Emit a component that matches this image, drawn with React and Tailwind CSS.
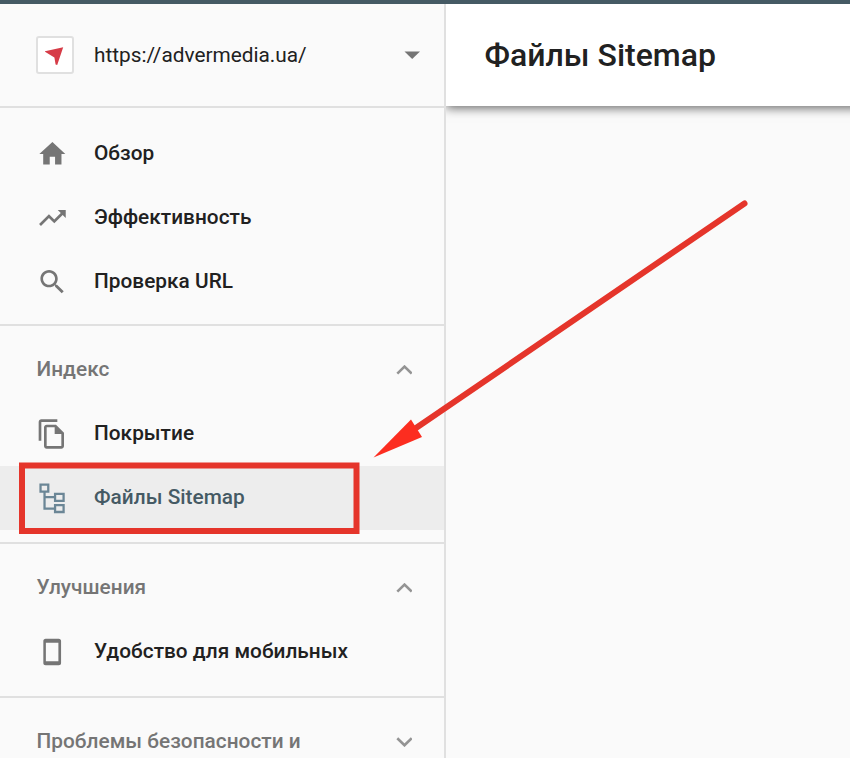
import React from "react";

function Icon({ children, className = "text-[#757575]" }) {
  return (
    <svg viewBox="0 0 24 24" className={"size-8 shrink-0 " + className} fill="currentColor">
      {children}
    </svg>
  );
}

const HomeIcon = () => (
  <Icon><path d="M10.3 19.8v-5.8h4v5.8h4.8v-7.8h2.9L12.3 3 2.5 12h2.9v7.8z" /></Icon>
);
const TrendIcon = () => (
  <Icon><path transform="translate(.3 0)" d="M16 6l2.29 2.29-4.88 4.88-4-4L2 16.59 3.41 18l6-6 4 4 6.3-6.29L22 12V6z" /></Icon>
);
const SearchIcon = () => (
  <Icon><path transform="translate(.3 0)" d="M15.5 14h-.79l-.28-.27C15.41 12.59 16 11.11 16 9.5 16 5.91 13.09 3 9.5 3S3 5.91 3 9.5 5.91 16 9.5 16c1.61 0 3.09-.59 4.23-1.57l.27.28v.79l5 4.99L20.49 19l-4.99-5zm-6 0C7.01 14 5 11.99 5 9.5S7.01 5 9.5 5 14 7.01 14 9.5 11.99 14 9.5 14z" /></Icon>
);
const CopyIcon = () => (
  <Icon>
    <path fillRule="evenodd" d="M16 1H4c-1.1 0-2 .9-2 2v14h2V3h12V1zm-1 4l6 6v10c0 1.1-.9 2-2 2H8c-1.1 0-2-.9-2-2V7c0-1.1.9-2 2-2h7zM8 7v14h11v-9h-5V7H8z" />
  </Icon>
);
const TreeIcon = () => (
  <Icon className="text-[#6b8696]">
    <g fill="none" stroke="currentColor" strokeWidth="1.7">
      <path d="M3.4 1.9h5.8v5.4H3.4zM14.3 8.9h6.4v5.2h-6.4zM14.3 17.3h6.4v5.2h-6.4zM6.4 7.3v12.6h8.1M6.4 11.4h8.1" />
    </g>
  </Icon>
);
const PhoneIcon = () => (
  <Icon>
    <path fillRule="evenodd" d="M7.2 2h9.9c1 0 1.7.7 1.7 1.7v16.6c0 1-.7 1.7-1.7 1.7H7.2c-1 0-1.7-.7-1.7-1.7V3.7C5.5 2.7 6.2 2 7.2 2zm.2 3v14h9.4V5z" />
  </Icon>
);

function Chevron({ down }) {
  return (
    <svg viewBox="0 0 16 10" className="h-[10px] w-4 shrink-0" fill="none" stroke="#949494" strokeWidth="2.6">
      <path d={down ? "M1.3 1.3 8.5 8.3 15.7 1.3" : "M1.3 8.6 8.5 1.6 15.7 8.6"} />
    </svg>
  );
}

function Item({ icon, label, selected }) {
  return (
    <li className={"flex h-16 items-center gap-[26px] pl-9 " + (selected ? "bg-[#ededed] text-[#455a64]" : "text-[#212121]")}>
      {icon}
      <span className="text-[20.8px] font-medium tracking-[0.03px] whitespace-nowrap">{label}</span>
    </li>
  );
}

function SectionTitle({ label, down }) {
  return (
    <div className="flex h-16 items-center justify-between pr-8 pl-[36.5px] text-[#757575]">
      <h2 className="text-[20.8px] font-medium tracking-[0.03px] whitespace-nowrap">{label}</h2>
      <Chevron down={down} />
    </div>
  );
}

export default function App() {
  return (
    <div className="relative flex h-[758px] w-[850px] flex-col overflow-hidden bg-[#fafafa] font-[Roboto,'Liberation_Sans',sans-serif]">
      <div className="h-1 shrink-0 bg-[#455a64]" />
      <div className="flex min-h-0 flex-1">
        <aside className="w-[446px] shrink-0 overflow-hidden border-r-2 border-[#e0e0e0]">
          <div className="flex h-[104px] items-center border-b-2 border-[#e0e0e0] pr-6 pl-9">
            <div className="flex size-[38px] items-center justify-center rounded-[3px] border-2 border-[#e0e0e0] bg-white">
              <svg viewBox="0 0 20 20" className="size-5">
                <path d="M-.6 6.4 18.2 2.2 12.2 20 10.6 19.6 9.4 12.4z" fill="#d63c47" />
              </svg>
            </div>
            <span className="mt-0.5 ml-5 flex-1 text-[20.8px] text-[#212121]">https://advermedia.ua/</span>
            <svg viewBox="0 0 16 8" className="h-2 w-4" fill="#757575"><path d="M.5 .5h15.5L8.2 8z" /></svg>
          </div>
          <ul className="border-b-2 border-[#e0e0e0] pt-[14px] pb-[10px]">
            <Item icon={<HomeIcon />} label="Обзор" />
            <Item icon={<TrendIcon />} label="Эффективность" />
            <Item icon={<SearchIcon />} label="Проверка URL" />
          </ul>
          <section className="border-b-2 border-[#e0e0e0] py-3">
            <SectionTitle label="Индекс" />
            <ul>
              <Item icon={<CopyIcon />} label="Покрытие" />
              <Item icon={<TreeIcon />} label="Файлы Sitemap" selected />
            </ul>
          </section>
          <section className="border-b-2 border-[#e0e0e0] py-3">
            <SectionTitle label="Улучшения" />
            <ul>
              <Item icon={<PhoneIcon />} label="Удобство для мобильных" />
            </ul>
          </section>
          <section className="pt-3">
            <SectionTitle label="Проблемы безопасности и" down />
          </section>
        </aside>
        <main className="min-w-0 flex-1 overflow-hidden">
          <header className="-mr-4 flex h-[102px] items-center bg-white pl-[38.5px] shadow-[0_2px_10px_rgba(0,0,0,0.6)]">
            <h1 className="text-[32px] font-medium text-[#212121]">Файлы Sitemap</h1>
          </header>
        </main>
      </div>
      <svg viewBox="0 0 850 758" className="pointer-events-none absolute inset-0 size-full">
        <rect x="22" y="465.5" width="334.5" height="65.5" fill="none" stroke="#e5352b" strokeWidth="6" />
        <path d="M744.5 203.5 416 428" stroke="#e5352b" strokeWidth="6" strokeLinecap="round" />
        <path d="M373.5 457.5 411 419.5 422 437z" fill="#fc2d20" />
      </svg>
    </div>
  );
}
